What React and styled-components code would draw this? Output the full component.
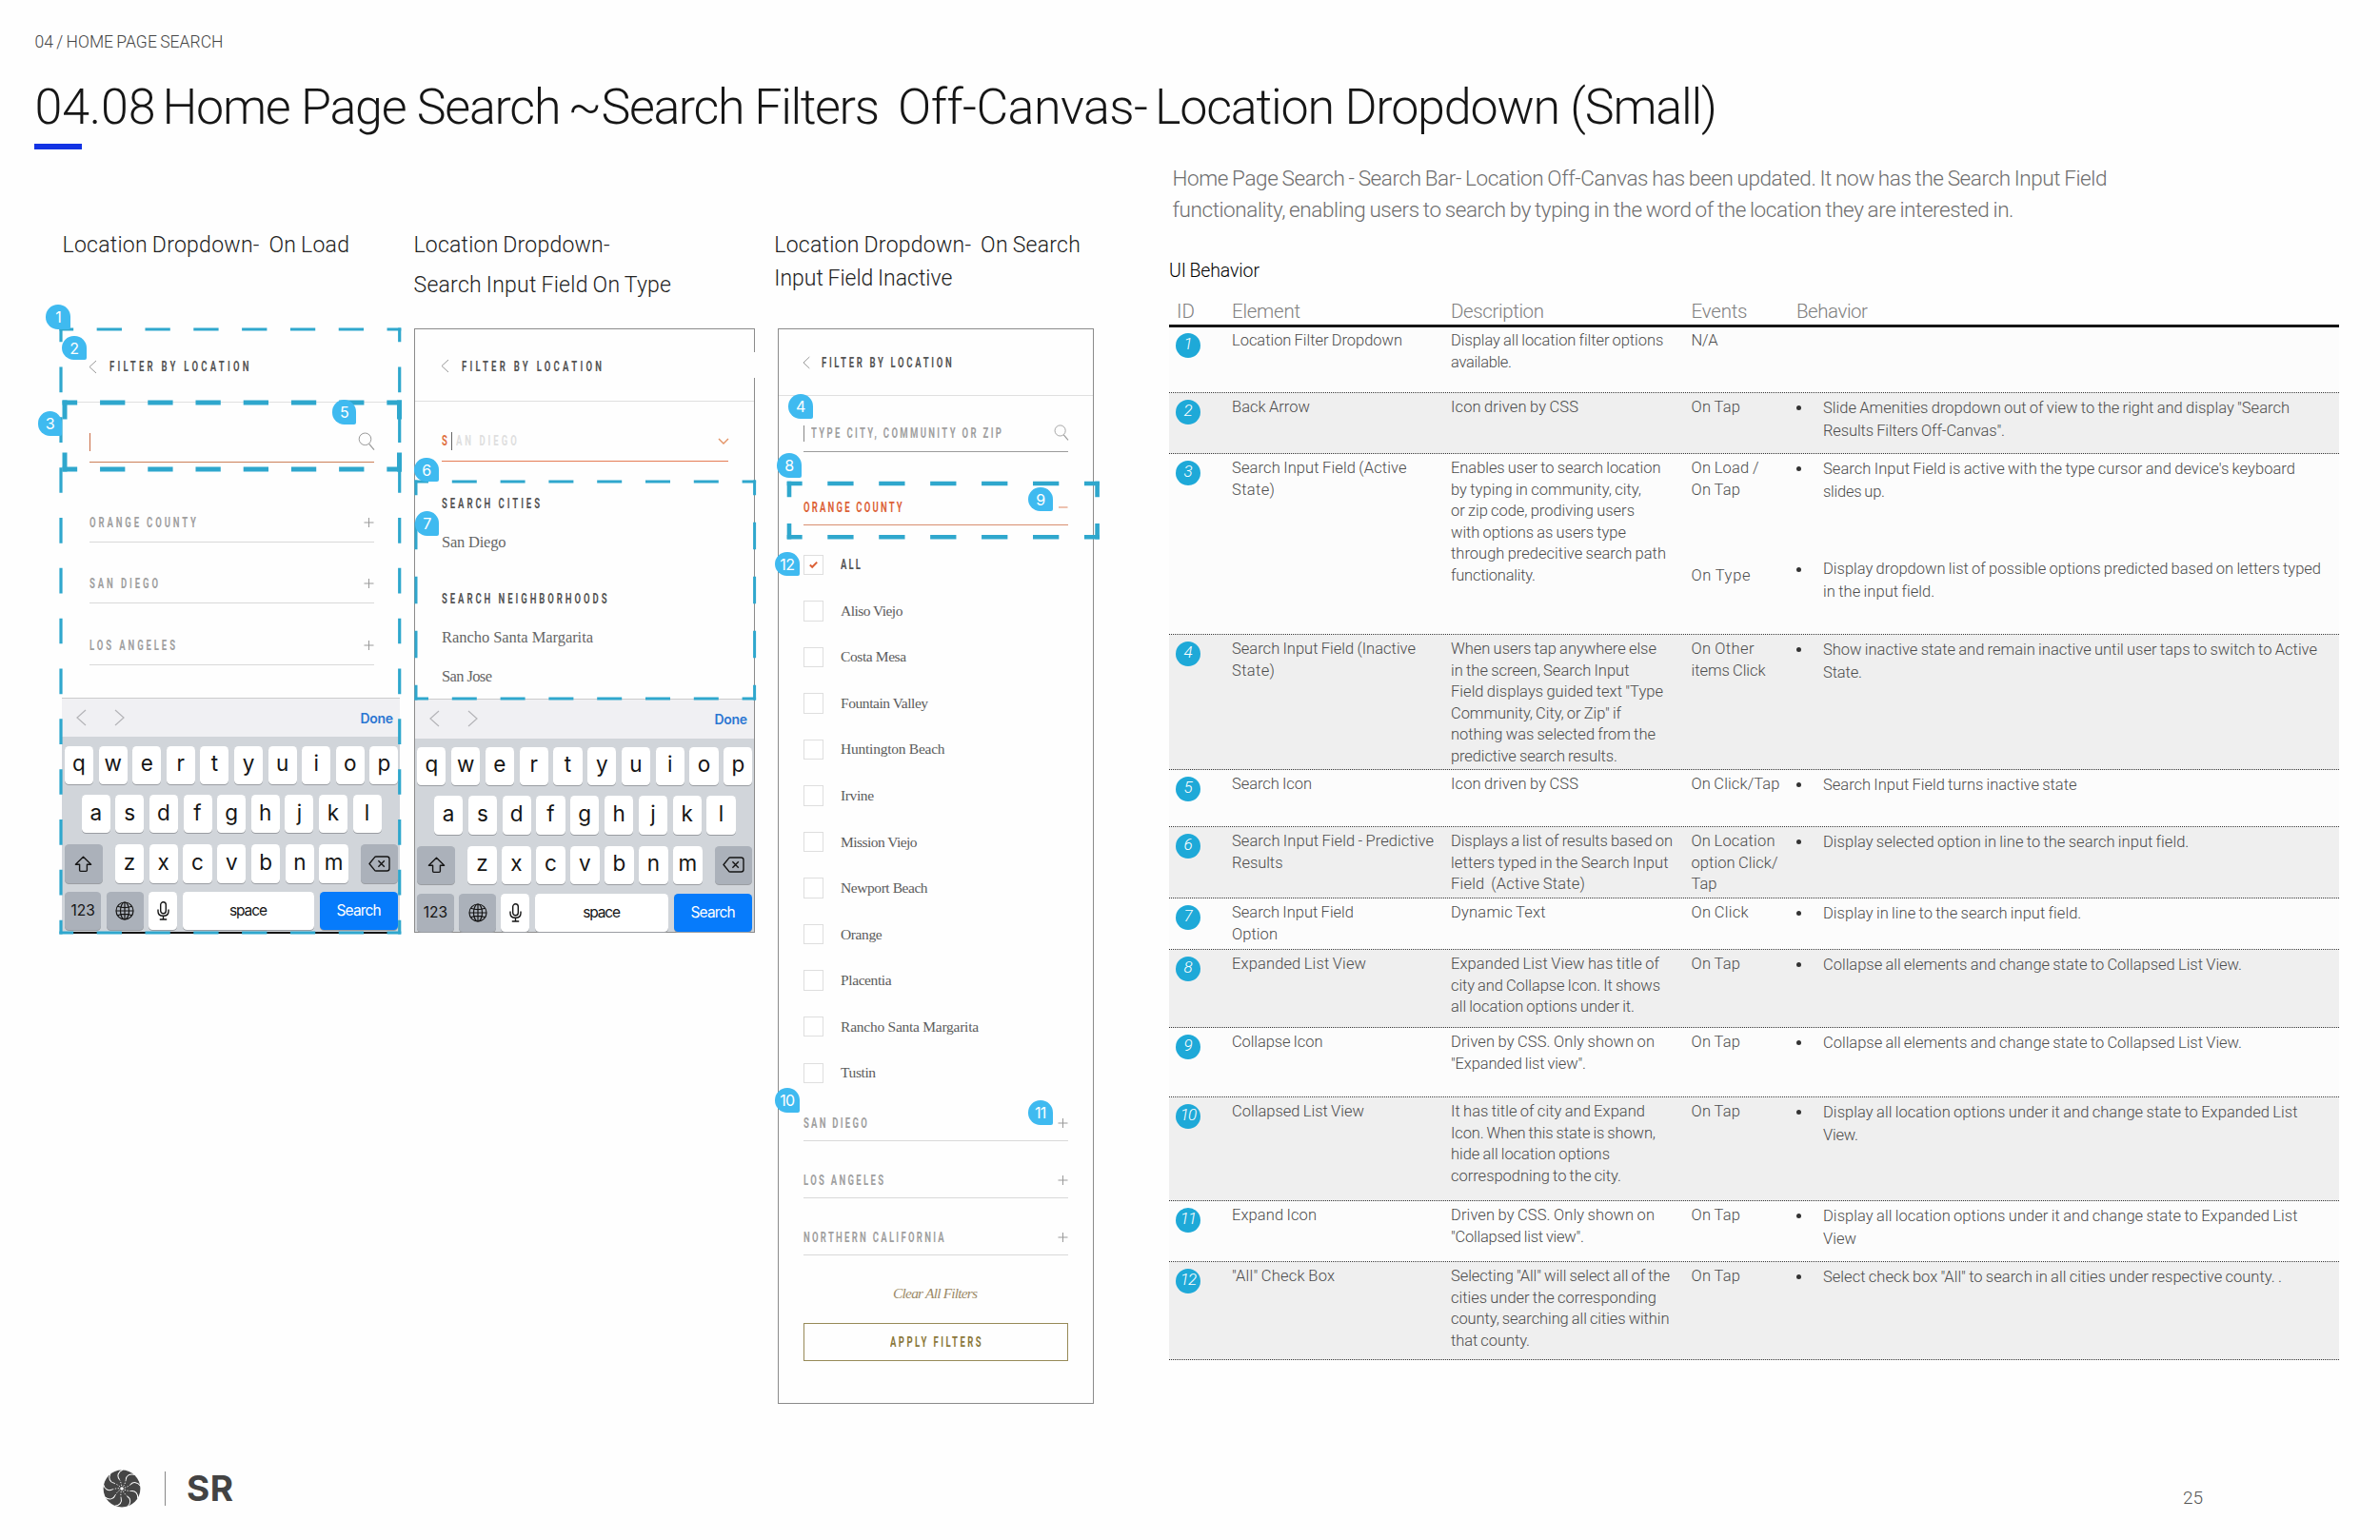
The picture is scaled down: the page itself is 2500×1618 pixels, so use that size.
import React, { useLayoutEffect, useRef } from "react";
import styled, { createGlobalStyle } from "styled-components";

const GlobalStyle = createGlobalStyle`
  * {
    box-sizing: border-box;
  }
  body {
    margin: 0;
    background: #fefefe;
  }
`;

const sans = `Roboto, "Liberation Sans", sans-serif`;
const ui = `Inter, "Liberation Sans", sans-serif`;
const serif = `"Liberation Serif", serif`;

const Page = styled.div`
  position: relative;
  width: 2500px;
  height: 1618px;
  overflow: hidden;
  background: #fefefe;
  font-family: ${sans};
  font-weight: 300;
`;

/* ---------- text ---------- */

const TextBox = styled.span`
  display: block;
  width: ${(props) => props.$w}px;
  white-space: pre;
`;

const TextInner = styled.span`
  display: inline-block;
  transform-origin: left center;
  transform: ${(props) => (props.$squeeze === 1 ? "none" : `scaleX(${props.$squeeze})`)};
`;

// One line of copy, tracked so that it fills the width it was set in.
const Line = ({ w, squeeze = 1, children }) => {
  const ref = useRef(null);
  useLayoutEffect(() => {
    const el = ref.current;
    el.style.letterSpacing = "0px";
    const natural = el.getBoundingClientRect().width / squeeze;
    const gaps = Math.max(children.length - 1, 1);
    el.style.letterSpacing = `${(w / squeeze - natural) / gaps}px`;
  }, [w, squeeze, children]);
  return (
    <TextBox $w={w}>
      <TextInner ref={ref} $squeeze={squeeze}>
        {children}
      </TextInner>
    </TextBox>
  );
};

const Label = styled.div`
  font-family: ${sans};
  font-weight: ${(props) => props.$weight || 700};
  font-size: 14px;
  line-height: 20px;
  color: ${(props) => props.$color || "#555"};
`;

const Caps = ({ w, color, weight, children }) => (
  <Label $color={color} $weight={weight}>
    <Line w={w} squeeze={0.68}>
      {children}
    </Line>
  </Label>
);

/* ---------- page header ---------- */

const Header = styled.header`
  padding: 32px 0 0 36.5px;
  height: 157px;
`;

const Crumb = styled.div`
  font-size: 17.5px;
  line-height: 24px;
  word-spacing: -1px;
  color: #444;
`;

const Title = styled.h1`
  display: flex;
  margin: 26.5px 0 0;
  gap: 7px;
  font-weight: 300;
  font-size: 52px;
  line-height: 60px;
  color: #161616;
`;

const Accent = styled.div`
  width: 50px;
  height: 6px;
  margin: 8.5px 0 0 -0.5px;
  background: #1233e4;
`;

const Main = styled.main`
  display: flex;
  align-items: flex-start;
  padding-left: 65px;
`;

/* ---------- phone mockups ---------- */

const Column = styled.section`
  flex: none;
  width: ${(props) => props.$w}px;
  margin-left: ${(props) => props.$gap || 0}px;
`;

const Caption = styled.h2`
  height: 188px;
  margin: 0 0 0 ${(props) => props.$shift}px;
  padding-top: ${(props) => props.$top || 84}px;
  font-weight: 300;
  font-size: 23px;
  line-height: ${(props) => props.$lh || 34.7}px;
  word-spacing: -1px;
  color: #222;
`;

const Phone = styled.div`
  position: relative;
  display: flex;
  flex-direction: column;
  height: ${(props) => props.$h}px;
  border: ${(props) => (props.$bordered ? "1px solid #8b8b8b" : "none")};
`;

const BorderBreak = styled.div`
  position: absolute;
  top: 24px;
  right: -2px;
  width: 4px;
  height: 27px;
  background: #fefefe;
`;

const PhoneHead = styled.div`
  flex: none;
  display: flex;
  align-items: center;
  gap: ${(props) => props.$gap || 14}px;
  height: ${(props) => props.$h}px;
  padding: ${(props) => props.$top}px 0 0 ${(props) => props.$left}px;
  border-bottom: 1px solid #e0e0e0;
`;

const Body = styled.div`
  padding: 0 ${(props) => props.$right}px 0 ${(props) => props.$left}px;
`;

const Field = styled.div`
  display: flex;
  align-items: center;
  height: ${(props) => props.$h}px;
  padding-top: 20px;
  border-bottom: ${(props) => props.$line};
`;

const Caret = styled.span`
  width: 1px;
  height: ${(props) => props.$h || 19}px;
  margin-right: ${(props) => props.$after || 0}px;
  margin-left: ${(props) => props.$before || 0}px;
  background: ${(props) => props.$color};
`;

const Push = styled.span`
  margin-left: auto;
  display: flex;
`;

const County = styled.div`
  display: flex;
  align-items: flex-end;
  justify-content: space-between;
  height: ${(props) => props.$h}px;
  margin-top: ${(props) => props.$gap || 0}px;
  padding-bottom: ${(props) => props.$bottom || 8}px;
  border-bottom: 1px solid ${(props) => props.$line || "#d9d9d9"};
`;

const SignBox = styled.span`
  display: flex;
  align-items: center;
  height: 20px;
`;

const Result = styled.div`
  margin-top: ${(props) => props.$gap}px;
  font-family: ${serif};
  font-weight: 400;
  font-size: 16.5px;
  line-height: 20px;
  color: #666;
`;

const CheckList = styled.div`
  margin-top: 17px;
`;

const CheckRow = styled.label`
  display: flex;
  align-items: center;
  gap: 18px;
  height: 48.55px;
  font-family: ${serif};
  font-weight: 400;
  font-size: 15.5px;
  line-height: 20px;
  color: #5c5c5c;
`;

const Box = styled.span`
  display: flex;
  align-items: center;
  justify-content: center;
  width: 21.5px;
  height: 21.5px;
  border: 1px solid #dedede;
  background: #fff;
`;

const ClearLink = styled.div`
  display: flex;
  justify-content: center;
  margin-top: 30.5px;
  font-family: ${serif};
  font-style: italic;
  font-weight: 400;
  font-size: 15.5px;
  line-height: 20px;
  color: #9c8a68;
`;

const ApplyButton = styled.div`
  display: flex;
  align-items: center;
  justify-content: center;
  height: 40px;
  margin-top: 20.5px;
  border: 1.5px solid #978a58;
`;

/* ---------- keyboard ---------- */

const KeyboardBox = styled.div`
  flex: none;
  margin-top: auto;
  border-top: 1px solid #cbcbcd;
  background: #d1d5da;
  font-family: ${ui};
  font-weight: 400;
`;

const AccessoryBar = styled.div`
  display: flex;
  align-items: center;
  height: ${(props) => props.$h}px;
  padding: 0 7px 1px 15.5px;
  gap: 31.5px;
  background: #f0f0f3;
`;

const Done = styled.span`
  margin-left: auto;
  font-weight: 600;
  font-size: 14px;
  line-height: 20px;
  padding-top: 2px;
  color: #2b76d2;
`;

const Keys = styled.div`
  padding: ${(props) => props.$pad};
`;

const KeyRow = styled.div`
  display: flex;
  gap: 5.6px;
  height: ${(props) => props.$h}px;
  padding: 0 ${(props) => props.$inset || 0}px;
  margin-bottom: ${(props) => props.$after || 0}px;
`;

const Key = styled.span`
  flex: ${(props) => (props.$w ? `0 0 ${props.$w}px` : "1 1 0")};
  display: flex;
  align-items: center;
  justify-content: center;
  margin-left: ${(props) => props.$before || 0}px;
  padding-bottom: ${(props) => (props.$small ? 0 : 3)}px;
  border-radius: 4.5px;
  background: ${(props) => props.$bg || "#fff"};
  box-shadow: 0 1px 0 #9a9da2;
  font-size: ${(props) => (props.$small ? 15.5 : 22.5)}px;
  line-height: 1;
  color: ${(props) => props.$color || "#151515"};
`;

const BottomEdge = styled.div`
  flex: none;
  height: 2px;
  background: #151515;
`;

/* ---------- table ---------- */

const Spec = styled.section`
  flex: none;
  width: 1229px;
  margin-left: 79px;
`;

const Intro = styled.div`
  margin: 14px 0 0 3.5px;
  font-size: 22.5px;
  line-height: 32.7px;
  word-spacing: -1px;
  color: #6e6e6e;
`;

const TableTitle = styled.h3`
  margin: 35.6px 0 0;
  font-weight: 300;
  font-size: 19.5px;
  line-height: 26px;
  word-spacing: -1px;
  color: #000;
`;

const columns = "66px 230px 252.5px 110.5px 1fr";

const HeadRow = styled.div`
  display: grid;
  grid-template-columns: ${columns};
  align-items: end;
  height: 46px;
  border-bottom: 3px solid #151515;
  font-size: 20.5px;
  line-height: 28px;
  color: #808080;
  & > :first-child {
    padding-left: 8px;
  }
`;

const Row = styled.div`
  display: grid;
  grid-template-columns: ${columns};
  align-items: start;
  height: ${(props) => props.$h}px;
  padding-top: ${(props) => props.$top || 4.3}px;
  border-bottom: 1px dotted #333;
  background: ${(props) => (props.$shade ? "#efefef" : "#fcfcfc")};
  font-size: 16.5px;
  line-height: 22.5px;
  word-spacing: -0.8px;
  color: #4c4c4c;
`;

const Dot = styled.span`
  display: flex;
  justify-content: center;
  width: 26px;
  height: 26px;
  margin: 2.6px 0 0 7px;
  border-radius: 50%;
  background: #1ea9d8;
  font-size: 17px;
  font-style: italic;
  line-height: 23px;
  letter-spacing: ${(props) => (props.$wide ? -1 : 0)}px;
  color: #fff;
`;

const Gap = styled.div`
  height: 22.5px;
`;

const Bullet = styled.div`
  display: flex;
  margin-bottom: ${(props) => props.$after || 0}px;
  line-height: 24.2px;
  margin-top: -0.8px;
  &::before {
    content: "";
    flex: none;
    width: 5px;
    height: 5px;
    margin: 9.8px 23px 0 0;
    border-radius: 50%;
    background: #333;
  }
`;

/* ---------- annotations ---------- */

const Badge = styled.span`
  position: absolute;
  left: ${(props) => props.$x}px;
  top: ${(props) => props.$y}px;
  display: flex;
  align-items: center;
  justify-content: center;
  width: 25.7px;
  height: 25.7px;
  border-radius: 50% 50% 2px 50%;
  background: #3fbaf0;
  font-family: ${ui};
  font-weight: 400;
  font-size: 16px;
  letter-spacing: -0.6px;
  color: #fff;
`;

const FrameSvg = styled.svg`
  position: absolute;
  left: ${(props) => props.$x}px;
  top: ${(props) => props.$y}px;
  overflow: visible;
`;

/* ---------- footer ---------- */

const Footer = styled.footer`
  position: absolute;
  left: 107.5px;
  right: 186px;
  bottom: 34px;
  height: 40px;
  display: flex;
  align-items: center;
`;

const Divider = styled.span`
  width: 1px;
  height: 36px;
  margin: 0 22.5px 0 25px;
  background: #888;
`;

const Brand = styled.span`
  font-family: ${ui};
  font-weight: 700;
  font-size: 37px;
  line-height: 40px;
  color: #434343;
`;

const PageNumber = styled.span`
  margin-left: auto;
  padding-top: 20px;
  font-size: 19px;
  line-height: 20px;
  color: #555;
`;

const Chevron = ({ w = 7, h = 13, dir = "left", color = "#999", stroke = 1 }) => {
  const d = {
    left: `M${w} 0 L0 ${h / 2} L${w} ${h}`,
    right: `M0 0 L${w} ${h / 2} L0 ${h}`,
    down: `M0 0 L${w / 2} ${h} L${w} 0`,
  }[dir];
  return (
    <svg width={w} height={h} overflow="visible">
      <path d={d} fill="none" stroke={color} strokeWidth={stroke} />
    </svg>
  );
};

const Sign = ({ minus, color = "#999" }) => (
  <SignBox>
    <svg width="11" height="10" overflow="visible">
      <path d={minus ? "M1 5H10.5" : "M0.5 5H10.5M5.5 0V10"} stroke={color} strokeWidth="1" />
    </svg>
  </SignBox>
);

const SearchIcon = ({ size = 17 }) => (
  <svg width={size} height={size * 1.18} viewBox="0 0 17 20" overflow="visible">
    <circle cx="7.5" cy="7.3" r="6.3" fill="none" stroke="#999" strokeWidth="1" />
    <path d="M11.7 12.3L17 18.6" stroke="#999" strokeWidth="1.3" />
  </svg>
);

const ShiftIcon = () => (
  <svg width="19" height="18" viewBox="0 0 19 18" fill="none" stroke="#151515" strokeWidth="1.4" strokeLinejoin="round">
    <path d="M9.5 1.2L17.6 9.3H13.4V15.3Q13.4 16.4 12.3 16.4H6.7Q5.6 16.4 5.6 15.3V9.3H1.4Z" />
  </svg>
);

const DeleteIcon = () => (
  <svg width="23" height="17" viewBox="0 0 23 17" fill="none" stroke="#151515" strokeWidth="1.4" strokeLinejoin="round">
    <path d="M8 1H19.5Q22 1 22 3.5V13.5Q22 16 19.5 16H8Q7.2 16 6.6 15.4L1 8.5L6.6 1.6Q7.2 1 8 1Z" />
    <path d="M10.4 5.2L16.8 11.8M16.8 5.2L10.4 11.8" />
  </svg>
);

const GlobeIcon = () => (
  <svg width="20" height="20" viewBox="0 0 20 20" fill="none" stroke="#151515" strokeWidth="1.2">
    <circle cx="10" cy="10" r="9" />
    <ellipse cx="10" cy="10" rx="4.5" ry="9" />
    <path d="M10 1V19M1 10H19M2.6 5.2Q10 8 17.4 5.2M2.6 14.8Q10 12 17.4 14.8" />
  </svg>
);

const MicIcon = () => (
  <svg width="13" height="20" viewBox="0 0 13 20" fill="none" stroke="#151515" strokeWidth="1.4">
    <rect x="3.7" y="0.8" width="5.6" height="12" rx="2.8" />
    <path d="M1 8.5V10.5Q1 15.3 6.5 15.3Q12 15.3 12 10.5V8.5M6.5 15.3V19M2.8 19H10.2" />
  </svg>
);

const LogoMark = () => (
  <svg width="40" height="40" viewBox="-20 -20 40 40">
    <circle r="19.4" fill="#454545" />
    {[0, 1, 2, 3, 4, 5, 6, 7, 8].map((i) => (
      <g key={i} transform={`rotate(${i * 40 - 5})`} fill="none" stroke="#fff">
        <path d="M2.5 -19.6C-2.5 -18 -4.2 -13.5 -1.8 -10" strokeWidth="1" />
        <path d="M-1.8 -10C-0.6 -7 0 -5 0 -2" strokeWidth="0.8" strokeDasharray="1.4 1.6" />
      </g>
    ))}
    <circle r="1.8" fill="#fff" />
  </svg>
);

// Dashes run from corner to corner, with half a dash at either end.
const DashFrame = ({ x, y, w, h, stroke, cols, rows, dashX, dashY }) => {
  const s = stroke / 2;
  const across = {
    strokeDasharray: `${dashX} ${w / cols - dashX}`,
    strokeDashoffset: dashX / 2 - s,
  };
  const down = {
    strokeDasharray: `${dashY} ${h / rows - dashY}`,
    strokeDashoffset: dashY / 2 - s,
  };
  return (
    <FrameSvg $x={x} $y={y} width={w} height={h} stroke="#2fa7cd" strokeWidth={stroke}>
      <line x1={-s} x2={w + s} y1={0} y2={0} {...across} />
      <line x1={-s} x2={w + s} y1={h} y2={h} {...across} />
      <line x1={0} x2={0} y1={-s} y2={h + s} {...down} />
      <line x1={w} x2={w} y1={-s} y2={h + s} {...down} />
    </FrameSvg>
  );
};

const Keyboard = ({ bar, keyHeight, pad }) => (
  <KeyboardBox>
    <AccessoryBar $h={bar}>
      <Chevron w={9} h={16} color="#b4b4b8" stroke={1.2} />
      <Chevron w={9} h={16} dir="right" color="#b4b4b8" stroke={1.2} />
      <Done>
        <Line w={34.5}>Done</Line>
      </Done>
    </AccessoryBar>
    <Keys $pad={pad}>
      <KeyRow $h={keyHeight} $after={11}>
        {"qwertyuiop".split("").map((k) => (
          <Key key={k}>{k}</Key>
        ))}
      </KeyRow>
      <KeyRow $h={keyHeight} $after={12} $inset={17.7}>
        {"asdfghjkl".split("").map((k) => (
          <Key key={k}>{k}</Key>
        ))}
      </KeyRow>
      <KeyRow $h={keyHeight} $after={9.3}>
        <Key $w={39.5} $small $bg="#abb1ba">
          <ShiftIcon />
        </Key>
        {"zxcvbnm".split("").map((k) => (
          <Key key={k} $before={k === "z" ? 7.8 : 0}>
            {k}
          </Key>
        ))}
        <Key $w={39.3} $before={7.8} $small $bg="#abb1ba">
          <DeleteIcon />
        </Key>
      </KeyRow>
      <KeyRow $h={keyHeight}>
        <Key $w={38.4} $small $bg="#abb1ba">
          123
        </Key>
        <Key $w={38.6} $small $bg="#abb1ba">
          <GlobeIcon />
        </Key>
        <Key $w={30} $small>
          <MicIcon />
        </Key>
        <Key $small>
          <Line w={40}>space</Line>
        </Key>
        <Key $w={82.5} $small $bg="#067bfb" $color="#fff">
          <Line w={47}>Search</Line>
        </Key>
      </KeyRow>
    </Keys>
  </KeyboardBox>
);

const cities = [
  ["Aliso Viejo", 65.3],
  ["Costa Mesa", 69],
  ["Fountain Valley", 92],
  ["Huntington Beach", 109.5],
  ["Irvine", 35],
  ["Mission Viejo", 80.5],
  ["Newport Beach", 91.5],
  ["Orange", 43.5],
  ["Placentia", 53.5],
  ["Rancho Santa Margarita", 145],
  ["Tustin", 37],
];

// Each cell is a list of [text, width] lines; null leaves a line empty.
const onTap = [["On Tap", 51.5]];

const rows = [
  {
    h: 69,
    top: 3.2,
    element: [["Location Filter Dropdown", 179]],
    description: [["Display all location filter options", 223], ["available.", 64]],
    events: [["N/A", 28]],
    behavior: [],
  },
  {
    h: 64,
    element: [["Back Arrow", 82]],
    description: [["Icon driven by CSS", 134]],
    events: onTap,
    behavior: [
      [["Slide Amenities dropdown out of view to the right and display \"Search", 490], ["Results Filters Off-Canvas\".", 191]],
    ],
  },
  {
    h: 190,
    element: [["Search Input Field (Active", 183.5], ["State)", 45]],
    description: [
      ["Enables user to search location", 220.5],
      ["by typing in community, city,", 200],
      ["or zip code, prodiving users", 193],
      ["with options as users type", 184],
      ["through predecitive search path", 226],
      ["functionality.", 89],
    ],
    events: [["On Load /", 71], ["On Tap", 51.5], null, null, null, ["On Type", 62]],
    behavior: [
      [["Search Input Field is active with the type cursor and device's keyboard", 496], ["slides up.", 65]],
      [["Display dropdown list of possible options predicted based on letters typed", 523], ["in the input field.", 117]],
    ],
  },
  {
    h: 142,
    element: [["Search Input Field (Inactive", 193], ["State)", 45]],
    description: [
      ["When users tap anywhere else", 216],
      ["in the screen, Search Input", 187.5],
      ["Field displays guided text \"Type", 223],
      ["Community, City, or Zip\" if", 179],
      ["nothing was selected from the", 215],
      ["predictive search results.", 175],
    ],
    events: [["On Other", 66], ["items Click", 78]],
    behavior: [
      [["Show inactive state and remain inactive until user taps to switch to Active", 519], ["State.", 41]],
    ],
  },
  {
    h: 60,
    element: [["Search Icon", 84]],
    description: [["Icon driven by CSS", 134]],
    events: [["On Click/Tap", 93]],
    behavior: [[["Search Input Field turns inactive state", 266.5]]],
  },
  {
    h: 75,
    element: [["Search Input Field - Predictive", 212], ["Results", 53.5]],
    description: [
      ["Displays a list of results based on", 233],
      ["letters typed in the Search Input", 228.5],
      ["Field  (Active State)", 141],
    ],
    events: [["On Location", 88], ["option Click/", 91], ["Tap", 27]],
    behavior: [[["Display selected option in line to the search input field.", 384]]],
  },
  {
    h: 54,
    element: [["Search Input Field", 128], ["Option", 48]],
    description: [["Dynamic Text", 99.5]],
    events: [["On Click", 60]],
    behavior: [[["Display in line to the search input field.", 271]]],
  },
  {
    h: 82,
    element: [["Expanded List View", 141]],
    description: [
      ["Expanded List View has title of", 219],
      ["city and Collapse Icon. It shows", 220],
      ["all location options under it.", 193],
    ],
    events: onTap,
    behavior: [[["Collapse all elements and change state to Collapsed List View.", 440]]],
  },
  {
    h: 73,
    element: [["Collapse Icon", 95.5]],
    description: [["Driven by CSS. Only shown on", 214], ["\"Expanded list view\".", 142]],
    events: onTap,
    behavior: [[["Collapse all elements and change state to Collapsed List View.", 440]]],
  },
  {
    h: 109,
    element: [["Collapsed List View", 139]],
    description: [
      ["It has title of city and Expand", 204],
      ["Icon. When this state is shown,", 215],
      ["hide all location options", 167],
      ["correspodning to the city.", 179],
    ],
    events: onTap,
    behavior: [
      [["Display all location options under it and change state to Expanded List", 498.5], ["View.", 37]],
    ],
  },
  {
    h: 64,
    element: [["Expand Icon", 89]],
    description: [["Driven by CSS. Only shown on", 214], ["\"Collapsed list view\".", 140]],
    events: onTap,
    behavior: [
      [["Display all location options under it and change state to Expanded List", 498.5], ["View", 35]],
    ],
  },
  {
    h: 103,
    element: [["\"All\" Check Box", 108]],
    description: [
      ["Selecting \"All\" will select all of the", 230],
      ["cities under the corresponding", 216],
      ["county, searching all cities within", 229.5],
      ["that county.", 83],
    ],
    events: onTap,
    behavior: [[["Select check box \"All\" to search in all cities under respective county. .", 482]]],
  },
];

const badges = [
  [1, 48.3, 320],
  [2, 65, 352.7],
  [3, 39.5, 432],
  [4, 828, 414],
  [5, 348.7, 420.3],
  [6, 435, 480.7],
  [7, 435.7, 537],
  [8, 816, 476.3],
  [9, 1080, 511.7],
  [10, 814, 1143.3],
  [11, 1080, 1156],
  [12, 814, 579.7],
];

const Lines = ({ items }) => (
  <div>
    {items.map((item, i) =>
      item ? (
        <Line key={i} w={item[1]}>
          {item[0]}
        </Line>
      ) : (
        <Gap key={i} />
      )
    )}
  </div>
);

const OnLoad = () => (
  <Column $w={355}>
    <Caption $shift={0.5}>
      <Line w={301.5}>Location Dropdown-  On Load</Line>
    </Caption>
    <Phone $h={636}>
      <PhoneHead $h={78} $top={3.4} $left={28.5}>
        <Chevron />
        <Caps w={146.5}>FILTER BY LOCATION</Caps>
      </PhoneHead>
      <Body $left={28.5} $right={27}>
        <Field $h={63} $line="1px solid #cb7f58">
          <Caret $color="#c96c45" />
          <Push>
            <SearchIcon />
          </Push>
        </Field>
        <County $h={64.4} $gap={19.6} $bottom={10}>
          <Caps w={112} color="#a0a0a0">ORANGE COUNTY</Caps>
          <Sign />
        </County>
        <County $h={64.4} $bottom={10}>
          <Caps w={72} color="#a0a0a0">SAN DIEGO</Caps>
          <Sign />
        </County>
        <County $h={64.4} $bottom={10}>
          <Caps w={90} color="#a0a0a0">LOS ANGELES</Caps>
          <Sign />
        </County>
      </Body>
      <Keyboard bar={40} keyHeight={40.2} pad="10px 1.7px 1.9px 3px" />
      <BottomEdge />
    </Phone>
  </Column>
);

const OnType = () => (
  <Column $w={358} $gap={15}>
    <Caption $shift={-0.5} $top={80} $lh={42}>
      <Line w={206}>Location Dropdown-</Line>
      <Line w={270.5}>Search Input Field On Type</Line>
    </Caption>
    <Phone $h={635} $bordered>
      <BorderBreak />
      <PhoneHead $h={76} $top={2.6} $left={28}>
        <Chevron />
        <Caps w={147}>FILTER BY LOCATION</Caps>
      </PhoneHead>
      <Body $left={28} $right={27.5}>
        <Field $h={63} $line="1px solid #e57c54">
          <Caps w={6} color="#e0703f">S</Caps>
          <Caret $color="#666" $before={4} $after={3.5} />
          <Caps w={63.7} color="#dfdfdf">AN DIEGO</Caps>
          <Push>
            <Chevron dir="down" w={10} h={5} color="#e39366" stroke={1.4} />
          </Push>
        </Field>
        <Result $gap={34}>
          <Caps w={103}>SEARCH CITIES</Caps>
        </Result>
        <Result $gap={20.8}>
          <Line w={67.5}>San Diego</Line>
        </Result>
        <Result $gap={39.2}>
          <Caps w={173.5}>SEARCH NEIGHBORHOODS</Caps>
        </Result>
        <Result $gap={21}>
          <Line w={159}>Rancho Santa Margarita</Line>
        </Result>
        <Result $gap={21}>
          <Line w={53}>San Jose</Line>
        </Result>
      </Body>
      <Keyboard bar={41} keyHeight={40.5} pad="9px 1.7px 0 2.3px" />
    </Phone>
  </Column>
);

const Inactive = () => (
  <Column $w={332} $gap={24}>
    <Caption $shift={-3.7}>
      <Line w={321.5}>Location Dropdown-  On Search</Line>
      <Line w={187}>Input Field Inactive</Line>
    </Caption>
    <Phone $h={1130} $bordered>
      <PhoneHead $h={70} $top={1.4} $left={26} $gap={12.5}>
        <Chevron w={6.3} h={12} />
        <Caps w={136.7}>FILTER BY LOCATION</Caps>
      </PhoneHead>
      <Body $left={25.6} $right={26.4}>
        <Field $h={59} $line="1px solid #9c9c9c">
          <Caret $color="#888" $h={17} $after={7} />
          <Caps w={200} color="#a0a0a0">TYPE CITY, COMMUNITY OR ZIP</Caps>
          <Push>
            <SearchIcon size={15} />
          </Push>
        </Field>
        <County $h={60} $gap={17} $line="#d98e70">
          <Caps w={103.7} color="#dc6238">ORANGE COUNTY</Caps>
          <Sign minus color="#dd8660" />
        </County>
        <CheckList>
          <CheckRow>
            <Box>
              <svg width="9" height="7" overflow="visible">
                <path d="M0.8 3.6L3.2 5.8L8.2 0.6" fill="none" stroke="#dc6238" strokeWidth="2" />
              </svg>
            </Box>
            <Caps w={21}>ALL</Caps>
          </CheckRow>
          {cities.map(([name, w]) => (
            <CheckRow key={name}>
              <Box />
              <Line w={w}>{name}</Line>
            </CheckRow>
          ))}
        </CheckList>
        <County $h={47.4}>
          <Caps w={66.7} color="#a0a0a0">SAN DIEGO</Caps>
          <Sign />
        </County>
        <County $h={60}>
          <Caps w={84} color="#a0a0a0">LOS ANGELES</Caps>
          <Sign />
        </County>
        <County $h={60}>
          <Caps w={147.7} color="#a0a0a0">NORTHERN CALIFORNIA</Caps>
          <Sign />
        </County>
        <ClearLink>
          <Line w={89}>Clear All Filters</Line>
        </ClearLink>
        <ApplyButton>
          <Caps w={95.7} color="#8b783b">APPLY FILTERS</Caps>
        </ApplyButton>
      </Body>
    </Phone>
  </Column>
);

const BehaviorTable = () => (
  <Spec>
    <Intro>
      <Line w={982}>
        {"Home Page Search - Search Bar- Location Off-Canvas has been updated. It now has the Search Input Field"}
      </Line>
      <Line w={884}>
        {"functionality, enabling users to search by typing in the word of the location they are interested in."}
      </Line>
    </Intro>
    <TableTitle>
      <Line w={95}>UI Behavior</Line>
    </TableTitle>
    <HeadRow>
      <Lines items={[["ID", 19]]} />
      <Lines items={[["Element", 72]]} />
      <Lines items={[["Description", 98]]} />
      <Lines items={[["Events", 59]]} />
      <Lines items={[["Behavior", 75]]} />
    </HeadRow>
    {rows.map((row, i) => (
      <Row key={i} $h={row.h} $top={row.top} $shade={i % 2 === 1}>
        <Dot $wide={i > 8}>{i + 1}</Dot>
        <Lines items={row.element} />
        <Lines items={row.description} />
        <Lines items={row.events} />
        <div>
          {row.behavior.map((item, n) => (
            <Bullet key={n} $after={n < row.behavior.length - 1 ? 58 : 0}>
              <Lines items={item} />
            </Bullet>
          ))}
        </div>
      </Row>
    ))}
  </Spec>
);

const App = () => {
  return (
    <Page>
      <GlobalStyle />
      <Header>
        <Crumb>
          <Line w={198}>04 / HOME PAGE SEARCH</Line>
        </Crumb>
        <Title>
          <Line w={127}>04.08</Line>
          <Line w={419}>Home Page Search</Line>
          <Line w={28}>~</Line>
          <Line w={292.5}>Search Filters</Line>
          <Line w={275}>{" Off-Canvas-"}</Line>
          <Line w={591}>Location Dropdown (Small)</Line>
        </Title>
        <Accent />
      </Header>
      <Main>
        <OnLoad />
        <OnType />
        <Inactive />
        <BehaviorTable />
      </Main>
      <DashFrame x={64} y={346.3} w={355.7} h={634} stroke={3.2} cols={7} rows={12} dashX={26.3} dashY={26.7} />
      <DashFrame x={67.7} y={422.5} w={351.5} h={70} stroke={5} cols={7} rows={1} dashX={26.3} dashY={35} />
      <DashFrame x={436.7} y={506.3} w={355.6} h={228} stroke={3} cols={7} rows={4} dashX={26} dashY={28.7} />
      <DashFrame x={828.7} y={507.7} w={323.6} h={56.3} stroke={4.6} cols={6} rows={1} dashX={27.3} dashY={28.4} />
      {badges.map(([n, x, y]) => (
        <Badge key={n} $x={x} $y={y}>
          {n}
        </Badge>
      ))}
      <Footer>
        <LogoMark />
        <Divider />
        <Brand>
          <Line w={49}>SR</Line>
        </Brand>
        <PageNumber>25</PageNumber>
      </Footer>
    </Page>
  );
};

export default App;
